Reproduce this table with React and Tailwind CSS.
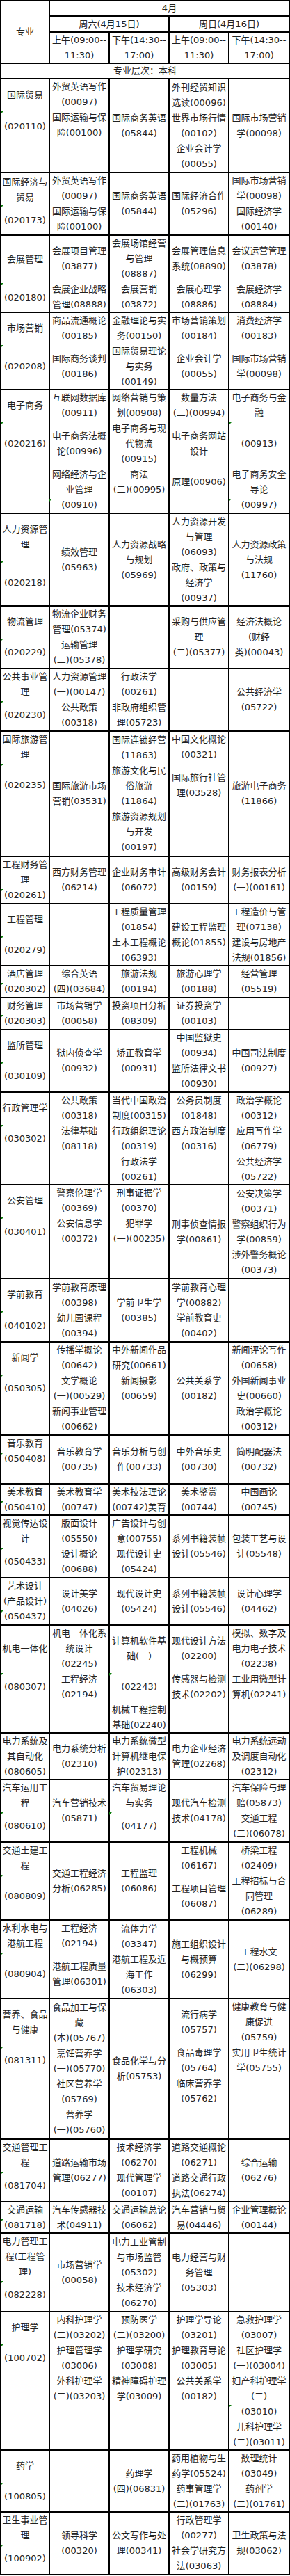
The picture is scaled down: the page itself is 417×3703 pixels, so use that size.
import React from 'react';

const SP = {
  '~2': 'h-[2px]',
  '~11': 'h-[11px]',
  '~12': 'h-[12px]',
  '~22': 'h-[22px]',
  '~23': 'h-[23px]',
  '~33': 'h-[33px]',
};

const MK = {
  1: 'top-[24px]',
  2: 'top-[46px]',
  3: 'top-[68px]',
  6: 'top-[133px]',
  7: 'top-[156px]',
};

const ROWS = [
  { h: 'h-[135px]', m: { 0: [2] }, c: ['^|~12|国际贸易|~23|(020110)', '^|外贸英语写作|(00097)|国际运输与保|险(00100)', '国际商务英语|(05844)', '外刊经贸知识|选读(00096)|世界市场行情|(00102)|企业会计学|(00055)', '国际市场营销|学(00098)'] },
  { h: 'h-[90px]', m: { 0: [2] }, c: ['^|~2|国际经济与|贸易|~11|(020173)', '外贸英语写作|(00097)|国际运输与保|险(00100)', '国际商务英语|(05844)', '国际经济合作|(05296)', '国际市场营销|学(00098)|国际经济学|(00140)'] },
  { h: 'h-[111px]', m: { 0: [3] }, c: ['^|~23|会展管理|~33|(020180)', '^|~11|会展项目管理|(03877)|~11|会展企业战略|管理(08888)', '会展场馆经营|与管理|(08887)|会展营销|(03872)', '^|~11|会展管理信息|系统(08890)|~11|会展心理学|(08886)', '^|~11|会议运营管理|(03878)|~11|会展经济学|(08884)'] },
  { h: 'h-[111px]', m: { 0: [2] }, c: ['^|~11|市场营销|~33|(020208)', '^|商品流通概论|(00185)|~11|国际商务谈判|(00186)', '金融理论与实|务(00150)|国际贸易理论|与实务|(00149)', '^|市场营销策划|(00184)|~11|企业会计学|(00055)', '^|消费经济学|(00183)|~11|国际市场营销|学(00098)'] },
  { h: 'h-[178px]', m: { 0: [2], 1: [7], 4: [2, 7] }, c: ['^|~11|电子商务|~33|(020216)', '^|互联网数据库|(00911)|~11|电子商务法概|论(00996)|~11|网络经济与企|业管理|(00910)', '^|网络营销与策|划(00908)|电子商务与现|代物流|(00915)|商法|(二)(00995)', '^|数量方法|(二)(00994)|~11|电子商务网站|设计|~22|原理(00906)', '^|电子商务与金|融|~22|(00913)|~22|电子商务安全|导论|(00997)'] },
  { h: 'h-[133px]', m: { 0: [3] }, c: ['^|~11|人力资源管|理|~33|(020218)', '绩效管理|(05963)', '人力资源战略|与规划|(05969)', '人力资源开发|与管理|(06093)|政府、政策与|经济学|(00937)', '人力资源政策|与法规|(11760)'] },
  { h: 'h-[90px]', m: { 0: [2] }, c: ['^|~11|物流管理|~22|(020229)', '物流企业财务|管理(05374)|运输管理|(二)(05378)', '', '采购与供应管|理|(二)(05377)', '经济法概论|(财经|类)(00043)'] },
  { h: 'h-[90px]', m: { 0: [2] }, c: ['^|公共事业管|理|~11|(020230)', '人力资源管理|(一)(00147)|公共政策|(00318)', '行政法学|(00261)|非政府组织管|理(05723)', '', '公共经济学|(05722)'] },
  { h: 'h-[180px]', m: { 0: [2] }, c: ['^|国际旅游管|理|~22|(020235)', '国际旅游市场|营销(03531)', '国际连锁经营|(11863)|旅游文化与民|俗旅游|(11864)|旅游资源规划|与开发|(00197)', '^|中国文化概论|(00321)|~11|国际旅行社管|理(03528)', '旅游电子商务|(11866)'] },
  { h: 'h-[68px]', m: { 0: [2] }, c: ['工程财务管|理|(020261)', '西方财务管理|(06214)', '企业财务审计|(06072)', '高级财务会计|(00159)', '财务报表分析|(一)(00161)'] },
  { h: 'h-[89px]', m: { 0: [2] }, c: ['^|~11|工程管理|~22|(020279)', '', '工程质量管理|(01854)|土木工程概论|(06393)', '建设工程监理|概论(01855)', '工程造价与管|理(07138)|建设与房地产|法规(01856)'] },
  { h: 'h-[46px]', m: { 0: [1] }, c: ['酒店管理|(020302)', '综合英语|(四)(03684)', '旅游法规|(00194)', '旅游心理学|(00188)', '经营管理|(05519)'] },
  { h: 'h-[46px]', m: { 0: [1] }, c: ['财务管理|(020303)', '市场营销学|(00058)', '投资项目分析|(08309)', '证券投资学|(00103)', ''] },
  { h: 'h-[90px]', m: { 0: [2] }, c: ['^|~11|监所管理|~22|(030109)', '狱内侦查学|(00932)', '矫正教育学|(00931)', '中国监狱史|(00934)|监所法律文书|(00930)', '中国司法制度|(00927)'] },
  { h: 'h-[133px]', m: { 0: [2] }, c: ['^|~11|行政管理学|~22|(030302)', '^|公共政策|(00318)|法律基础|(08118)', '当代中国政治|制度(00315)|行政组织理论|(00319)|行政法学|(00261)', '^|公务员制度|(01848)|西方政治制度|(00316)', '政治学概论|(00312)|应用写作学|(06779)|公共经济学|(05722)'] },
  { h: 'h-[135px]', m: { 0: [2] }, c: ['^|~11|公安管理|~23|(030401)', '^|警察伦理学|(00369)|公安信息学|(00372)', '^|刑事证据学|(00370)|犯罪学|(一)(00235)', '刑事侦查情报|学(00861)', '公安决策学|(00371)|警察组织行为|学(00859)|涉外警务概论|(00373)'] },
  { h: 'h-[91px]', m: { 0: [2] }, c: ['^|~11|学前教育|~23|(040102)', '学前教育原理|(00398)|幼儿园课程|(00394)', '学前卫生学|(00385)', '学前教育心理|学(00882)|学前教育史|(00402)', ''] },
  { h: 'h-[134px]', m: { 0: [2] }, c: ['^|~11|新闻学|~22|(050305)', '传播学概论|(00642)|文学概论|(一)(00529)|新闻事业管理|(00662)', '^|中外新闻作品|研究(00661)|新闻摄影|(00659)', '公共关系学|(00182)', '新闻评论写作|(00658)|外国新闻事业|史(00660)|政治学概论|(00312)'] },
  { h: 'h-[70px]', m: { 0: [1] }, c: ['^|音乐教育|(050408)', '音乐教育学|(00735)', '音乐分析与创|作(00733)', '中外音乐史|(00730)', '简明配器法|(00732)'] },
  { h: 'h-[45px]', m: { 0: [1] }, c: ['美术教育|(050410)', '美术教育学|(00747)', '美术技法理论|(00742)美育', '美术鉴赏|(00744)', '中国画论|(00745)'] },
  { h: 'h-[90px]', m: { 0: [2] }, c: ['^|视觉传达设|计|~11|(050433)', '版面设计|(05550)|设计概论|(00688)', '广告设计与创|意(00755)|现代设计史|(05424)', '系列书籍装帧|设计(05546)', '包装工艺与设|计(05548)'] },
  { h: 'h-[68px]', m: { 0: [2] }, c: ['艺术设计|(产品设计)|(050437)', '设计美学|(04026)', '现代设计史|(05424)', '系列书籍装帧|设计(05546)', '设计心理学|(04462)'] },
  { h: 'h-[155px]', m: { 0: [3], 2: [3] }, c: ['^|~22|机电一体化|~33|(080307)', '^|机电一体化系|统设计|(02245)|工程经济|(02194)', '^|~11|计算机软件基|础(一)|~22|(02243)|~11|机械工程控制|基础(02240)', '^|~11|现代设计方法|(02200)|~11|传感器与检测|技术(02202)', '^|模拟、数字及|电力电子技术|(02238)|工业用微型计|算机(02241)'] },
  { h: 'h-[67px]', m: {}, c: ['电力系统及|其自动化|(080605)', '电力系统分析|(02310)', '电力系统微型|计算机继电保|护(02313)', '电力企业经济|管理(02268)', '电力系统远动|及调度自动化|(02312)'] },
  { h: 'h-[90px]', m: { 0: [2], 2: [2] }, c: ['^|汽车运用工|程|~11|(080610)', '汽车营销技术|(05871)', '^|汽车贸易理论|与实务|~11|(04177)', '现代汽车检测|技术(04178)', '汽车保险与理|赔(05873)|交通工程|(二)(06078)'] },
  { h: 'h-[112px]', m: { 0: [2] }, c: ['^|交通土建工|程|~22|(080809)', '交通工程经济|分析(06285)', '工程监理|(06086)', '^|工程机械|(06167)|~11|工程项目管理|(06087)', '桥梁工程|(02409)|工程招标与合|同管理|(06289)'] },
  { h: 'h-[113px]', m: { 0: [2] }, c: ['^|水利水电与|港航工程|~22|(080904)', '^|工程经济|(02194)|~11|港航工程质量|管理(06301)', '流体力学|(03347)|港航工程及近|海工作|(06303)', '施工组织设计|与概预算|(06299)', '工程水文|(二)(06298)'] },
  { h: 'h-[202px]', m: { 0: [3] }, c: ['^|~11|营养、食品|与健康|~22|(081311)', '食品加工与保|藏|(本)(05767)|烹饪营养学|(一)(05770)|社区营养学|(05769)|营养学|(一)(05760)', '食品化学与分|析(05753)', '^|~11|流行病学|(05757)|~11|食品毒理学|(05764)|临床营养学|(05762)', '^|健康教育与健|康促进|(05759)|实用卫生统计|学(05755)'] },
  { h: 'h-[90px]', m: { 0: [2] }, c: ['^|交通管理工|程|~11|(081704)', '道路运输市场|管理(06277)', '技术经济学|(06270)|现代管理学|(00107)', '道路交通概论|(06271)|道路交通行政|执法(06274)', '综合运输|(06276)'] },
  { h: 'h-[45px]', m: { 0: [1] }, c: ['交通运输|(081718)', '汽车传感器技|术(04911)', '交通运输总论|(06062)', '汽车营销与贸|易(04446)', '企业管理概论|(00144)'] },
  { h: 'h-[113px]', m: { 0: [3] }, c: ['^|电力管理工|程(工程管|理)|~11|(082228)', '市场营销学|(00058)', '电力工业管制|与市场监管|(05302)|技术经济学|(06270)', '电力经营与财|务管理|(05303)', ''] },
  { h: 'h-[199px]', m: { 0: [2], 4: [6] }, c: ['^|~11|护理学|~22|(100702)', '^|内科护理学|(二)(03202)|护理管理学|(03006)|外科护理学|(二)(03203)', '^|预防医学|(二)(03200)|护理学研究|(03008)|精神障碍护理|学(03009)', '^|护理学导论|(03201)|护理教育导论|(03005)|公共关系学|(00182)', '急救护理学|(03007)|社区护理学|(一)(03004)|妇产科护理学|(二)|(03010)|儿科护理学|(二)(03011)'] },
  { h: 'h-[89px]', m: { 0: [2] }, c: ['^|~11|药学|~22|(100805)', '', '药理学|(四)(06831)', '药用植物与生|药学(05524)|药事管理学|(二)(01763)', '数理统计|(03049)|药剂学|(二)(01761)'] },
  { h: 'h-[90px]', m: { 0: [2] }, c: ['^|卫生事业管|理|~11|(100902)', '领导科学|(00320)', '公文写作与处|理(00341)', '行政管理学|(00277)|社会学研究方|法(03063)', '卫生政策与法|规(03062)'] },
];

function Cell({ spec, h, marks, extra }) {
  const top = spec.startsWith('^');
  const items = (top ? spec.slice(1) : spec).split('|').filter(Boolean);
  return (
    <div
      className={`relative flex flex-col border-r-2 border-b-2 border-black ${top ? 'justify-start' : 'justify-center'} ${h} ${extra || ''}`}
    >
      {items.map((t, i) =>
        SP[t] ? (
          <div key={i} className={`shrink-0 ${SP[t]}`} />
        ) : (
          <div key={i} className="shrink-0 h-[22px] leading-[22px] text-center whitespace-nowrap">
            {t}
          </div>
        )
      )}
      {(marks || []).map((k) => (
        <span
          key={k}
          className={`absolute -left-[1px] w-[4px] h-[4px] bg-[#0b7d0b] [clip-path:polygon(0_0,100%_0,0_100%)] ${MK[k]}`}
        />
      ))}
    </div>
  );
}

export default function App() {
  return (
    <div className="w-[417px] bg-white text-[13px] text-[#222] font-['DejaVu_Sans','Noto_Sans_CJK_SC',sans-serif]">
      <div className="grid grid-cols-[70px_86px_86px_86px_87px] border-l-2 border-t-2 border-black">
        <Cell spec="专业" h="h-[90px]" extra="row-span-3" />
        <Cell spec="4月" h="h-[22px]" extra="col-span-4" />
        <Cell spec="周六(4月15日)" h="h-[23px]" extra="col-span-2" />
        <Cell spec="周日(4月16日)" h="h-[23px]" extra="col-span-2" />
        <Cell spec="上午(09:00--|11:30)" h="h-[45px]" />
        <Cell spec="下午(14:30--|17:00)" h="h-[45px]" />
        <Cell spec="上午(09:00--|11:30)" h="h-[45px]" />
        <Cell spec="下午(14:30--|17:00)" h="h-[45px]" />
        <Cell spec="专业层次：本科" h="h-[22px]" extra="col-span-5" />
        {ROWS.map((r, ri) =>
          r.c.map((spec, ci) => (
            <Cell key={`${ri}-${ci}`} spec={spec} h={r.h} marks={r.m[ci]} />
          ))
        )}
      </div>
    </div>
  );
}
